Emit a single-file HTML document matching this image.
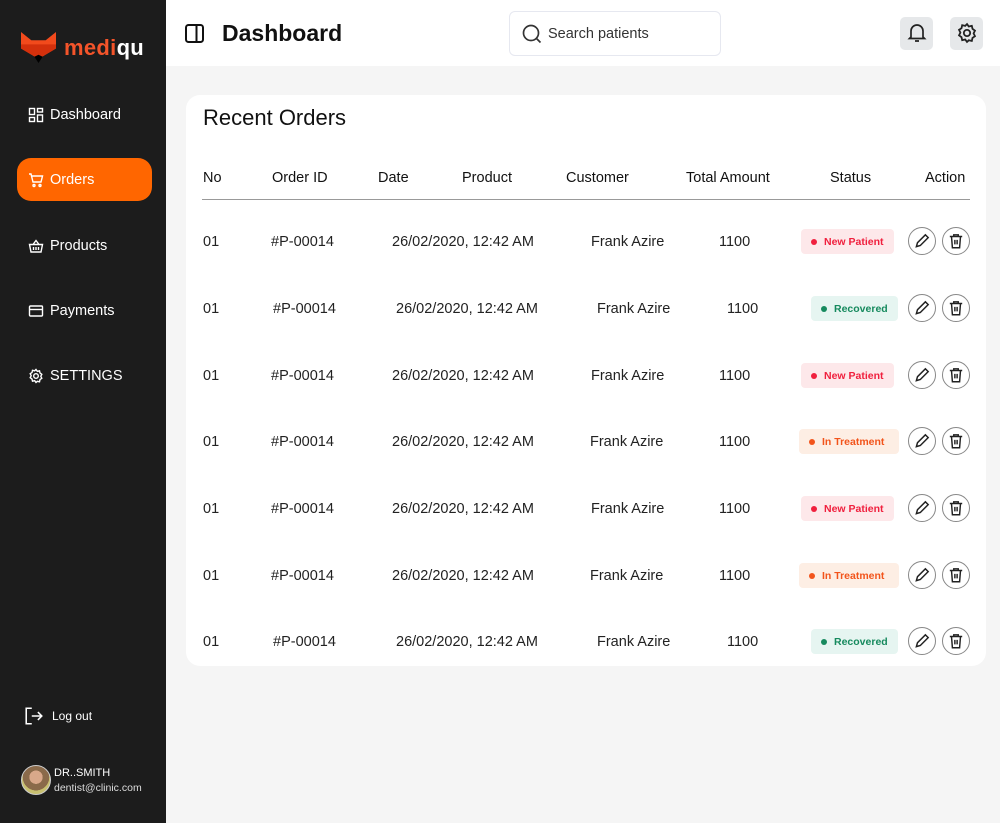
<!DOCTYPE html>
<html><head><meta charset="utf-8"><style>
*{margin:0;padding:0;box-sizing:border-box}
body{width:1000px;height:823px;overflow:hidden;font-family:"Liberation Sans",sans-serif;background:#f5f5f5;position:relative;color:#111}
.sb{position:absolute;left:0;top:0;width:166px;height:823px;background:#1c1c1c;color:#fff}
.abs{position:absolute}
.nav{position:absolute;left:28px;font-size:14.5px;display:flex;align-items:center;gap:6px;color:#fff}
.nav svg{width:16px;height:16px;fill:none;stroke:#fff;stroke-width:1.4}
.top{position:absolute;left:166px;top:0;right:0;height:66px;background:#fff}
.card{position:absolute;left:186px;top:95px;width:800px;height:571px;background:#fff;border-radius:14px}
.h{position:absolute;top:170px;font-size:14.5px;color:#111}
.row{position:absolute;left:0;width:1000px;height:30px}
.row span{position:absolute;top:1px;line-height:30px;font-size:14.5px;color:#222}
.b{position:absolute;top:3px;height:25px;border-radius:4px;font-size:10.5px;font-weight:bold;display:flex;align-items:center;padding-left:10px;gap:7px}
.b i{width:6px;height:6px;border-radius:50%;display:block}
.np{left:801px;width:93px;background:#fde8ea;color:#f0203e}.np i{background:#f0203e}
.rc{left:811px;width:87px;background:#e6f5f1;color:#168a5e}.rc i{background:#168a5e}
.it{left:799px;width:100px;background:#fdeee4;color:#f2541b}.it i{background:#f2541b}
.ic{position:absolute;top:1px;width:28px;height:28px;border:1px solid #888;border-radius:50%;display:flex;align-items:center;justify-content:center}
.ic svg{width:18px;height:18px;fill:none;stroke:#222;stroke-width:1.3}
</style></head><body>
<div class="sb">
 <svg class="abs" style="left:21px;top:32px" width="35" height="31" viewBox="0 0 34 30"><polygon points="0,0 10,8 24,8 34,0 34,16 17,26 0,16" fill="#f24a1c"/><polygon points="0,12 17,12 34,12 34,16 17,26 0,16" fill="#d4300c"/><polygon points="13,24 17,30 21,24 17,22" fill="#000"/></svg>
 <div class="abs" style="left:64px;top:35px;font-size:22px;font-weight:bold;letter-spacing:0.3px"><span style="color:#f4542a">medi</span><span style="color:#fff">qu</span></div>
 <div class="nav" style="top:107px"><svg viewBox="0 0 16 16"><rect x="1.5" y="1.5" width="5" height="6"/><rect x="9.5" y="1.5" width="5" height="3.5"/><rect x="1.5" y="10.5" width="5" height="4"/><rect x="9.5" y="8" width="5" height="6.5"/></svg>Dashboard</div>
 <div class="abs" style="left:17px;top:158px;width:135px;height:43px;background:#ff6600;border-radius:14px"></div>
 <div class="nav" style="top:172px"><svg viewBox="0 0 16 16"><path d="M1 2h2l2 8h8l1.5-6H4"/><circle cx="6" cy="13.5" r="1"/><circle cx="12" cy="13.5" r="1"/></svg>Orders</div>
 <div class="nav" style="top:238px"><svg viewBox="0 0 16 16"><path d="M1.5 6.5h13l-1.5 7.5h-10zM5 6.5l3-4 3 4M5.5 9v3M8 9v3M10.5 9v3"/></svg>Products</div>
 <div class="nav" style="top:303px"><svg viewBox="0 0 16 16"><rect x="1.5" y="3" width="13" height="10" rx="1"/><path d="M1.5 6.5h13"/></svg>Payments</div>
 <div class="nav" style="top:368px"><svg viewBox="0 0 16 16"><circle cx="8" cy="8" r="2.3"/><path d="M8 1.5l1.3 1.8 2.2-.5.5 2.2 1.8 1.3-1 2 1 2-1.8 1.3-.5 2.2-2.2-.5L8 14.5l-1.3-1.8-2.2.5-.5-2.2L2.2 9.7l1-2-1-2L4 4.5l.5-2.2 2.2.5z"/></svg>SETTINGS</div>
 <div class="nav" style="top:705px;font-size:12px;gap:8px;left:24px"><svg viewBox="0 0 18 18" style="width:20px;height:22px"><path d="M7 2H2v14h5M7 9h9M12.5 5.5L16 9l-3.5 3.5"/></svg>Log out</div>
 <div class="abs" style="left:21px;top:765px;width:30px;height:30px;border-radius:50%;background:radial-gradient(circle at 50% 40%,#d9a88a 0 30%,#8a6a4a 31% 60%,#c8c070 61%);border:1px solid #ccc"></div>
 <div class="abs" style="left:54px;top:767px;font-size:11px;color:#fff">DR..SMITH</div>
 <div class="abs" style="left:54px;top:782px;font-size:10.5px;color:#ddd">dentist@clinic.com</div>
</div>
<div class="top">
 <svg class="abs" style="left:19px;top:24px" width="20" height="20" viewBox="0 0 20 20" fill="none" stroke="#111" stroke-width="2"><rect x="1" y="1" width="17" height="17" rx="2.5"/><path d="M11.5 1v17"/></svg>
 <div class="abs" style="left:56px;top:20px;font-size:23px;font-weight:bold">Dashboard</div>
 <div class="abs" style="left:343px;top:11px;width:212px;height:45px;border:1px solid #e6e8f0;border-radius:6px"></div>
 <svg class="abs" style="left:355px;top:23px" width="22" height="22" viewBox="0 0 22 22" fill="none" stroke="#333" stroke-width="1.7"><circle cx="10" cy="10" r="7.5"/><path d="M15.5 15.5l4 4"/></svg>
 <div class="abs" style="left:382px;top:26px;font-size:14.5px;color:#333">Search patients</div>
 <div class="abs" style="left:734px;top:17px;width:33px;height:33px;border-radius:5px;background:#e6e8ea"></div>
 <svg class="abs" style="left:740px;top:22px" width="22" height="22" viewBox="0 0 22 22" fill="none" stroke="#222" stroke-width="1.7"><path d="M5 15V9a6 6 0 0 1 12 0v6l1.5 1.5h-15zM9 19h4"/></svg>
 <div class="abs" style="left:784px;top:17px;width:33px;height:33px;border-radius:5px;background:#e6e8ea"></div>
 <svg class="abs" style="left:790px;top:22px" width="22" height="22" viewBox="0 0 16 16" fill="none" stroke="#222" stroke-width="1.3"><circle cx="8" cy="8" r="2.3"/><path d="M8 1.5l1.3 1.8 2.2-.5.5 2.2 1.8 1.3-1 2 1 2-1.8 1.3-.5 2.2-2.2-.5L8 14.5l-1.3-1.8-2.2.5-.5-2.2L2.2 9.7l1-2-1-2L4 4.5l.5-2.2 2.2.5z"/></svg>
</div>
<div class="card"></div>
<div class="abs" style="left:203px;top:105px;font-size:22px">Recent Orders</div>
<div class="h" style="left:203px">No</div><div class="h" style="left:272px">Order ID</div><div class="h" style="left:378px">Date</div><div class="h" style="left:462px">Product</div><div class="h" style="left:566px">Customer</div><div class="h" style="left:686px">Total Amount</div><div class="h" style="left:830px">Status</div><div class="h" style="left:925px">Action</div>
<div class="abs" style="left:202px;top:199px;width:768px;height:1px;background:#999"></div>

<div class="row" style="top:226px"><span style="left:203px">01</span><span style="left:271px">#P-00014</span><span style="left:392px">26/02/2020, 12:42 AM</span><span style="left:591px">Frank Azire</span><span style="left:719px">1100</span><div class="b np"><i></i>New Patient</div><div class="ic" style="left:908px"><svg viewBox="0 0 16 16"><path d="M3 13l1-3.5 7-7 2.5 2.5-7 7z"/></svg></div><div class="ic" style="left:942px"><svg viewBox="0 0 16 16"><path d="M2.5 4h11M6 4V2.5h4V4M4 4l.8 10h6.4L12 4M7 7v4M9 7v4"/></svg></div></div>
<div class="row" style="top:293px"><span style="left:203px">01</span><span style="left:273px">#P-00014</span><span style="left:396px">26/02/2020, 12:42 AM</span><span style="left:597px">Frank Azire</span><span style="left:727px">1100</span><div class="b rc"><i></i>Recovered</div><div class="ic" style="left:908px"><svg viewBox="0 0 16 16"><path d="M3 13l1-3.5 7-7 2.5 2.5-7 7z"/></svg></div><div class="ic" style="left:942px"><svg viewBox="0 0 16 16"><path d="M2.5 4h11M6 4V2.5h4V4M4 4l.8 10h6.4L12 4M7 7v4M9 7v4"/></svg></div></div>
<div class="row" style="top:360px"><span style="left:203px">01</span><span style="left:271px">#P-00014</span><span style="left:392px">26/02/2020, 12:42 AM</span><span style="left:591px">Frank Azire</span><span style="left:719px">1100</span><div class="b np"><i></i>New Patient</div><div class="ic" style="left:908px"><svg viewBox="0 0 16 16"><path d="M3 13l1-3.5 7-7 2.5 2.5-7 7z"/></svg></div><div class="ic" style="left:942px"><svg viewBox="0 0 16 16"><path d="M2.5 4h11M6 4V2.5h4V4M4 4l.8 10h6.4L12 4M7 7v4M9 7v4"/></svg></div></div>
<div class="row" style="top:426px"><span style="left:203px">01</span><span style="left:271px">#P-00014</span><span style="left:392px">26/02/2020, 12:42 AM</span><span style="left:590px">Frank Azire</span><span style="left:719px">1100</span><div class="b it"><i></i>In Treatment</div><div class="ic" style="left:908px"><svg viewBox="0 0 16 16"><path d="M3 13l1-3.5 7-7 2.5 2.5-7 7z"/></svg></div><div class="ic" style="left:942px"><svg viewBox="0 0 16 16"><path d="M2.5 4h11M6 4V2.5h4V4M4 4l.8 10h6.4L12 4M7 7v4M9 7v4"/></svg></div></div>
<div class="row" style="top:493px"><span style="left:203px">01</span><span style="left:271px">#P-00014</span><span style="left:392px">26/02/2020, 12:42 AM</span><span style="left:591px">Frank Azire</span><span style="left:719px">1100</span><div class="b np"><i></i>New Patient</div><div class="ic" style="left:908px"><svg viewBox="0 0 16 16"><path d="M3 13l1-3.5 7-7 2.5 2.5-7 7z"/></svg></div><div class="ic" style="left:942px"><svg viewBox="0 0 16 16"><path d="M2.5 4h11M6 4V2.5h4V4M4 4l.8 10h6.4L12 4M7 7v4M9 7v4"/></svg></div></div>
<div class="row" style="top:560px"><span style="left:203px">01</span><span style="left:271px">#P-00014</span><span style="left:392px">26/02/2020, 12:42 AM</span><span style="left:590px">Frank Azire</span><span style="left:719px">1100</span><div class="b it"><i></i>In Treatment</div><div class="ic" style="left:908px"><svg viewBox="0 0 16 16"><path d="M3 13l1-3.5 7-7 2.5 2.5-7 7z"/></svg></div><div class="ic" style="left:942px"><svg viewBox="0 0 16 16"><path d="M2.5 4h11M6 4V2.5h4V4M4 4l.8 10h6.4L12 4M7 7v4M9 7v4"/></svg></div></div>
<div class="row" style="top:626px"><span style="left:203px">01</span><span style="left:273px">#P-00014</span><span style="left:396px">26/02/2020, 12:42 AM</span><span style="left:597px">Frank Azire</span><span style="left:727px">1100</span><div class="b rc"><i></i>Recovered</div><div class="ic" style="left:908px"><svg viewBox="0 0 16 16"><path d="M3 13l1-3.5 7-7 2.5 2.5-7 7z"/></svg></div><div class="ic" style="left:942px"><svg viewBox="0 0 16 16"><path d="M2.5 4h11M6 4V2.5h4V4M4 4l.8 10h6.4L12 4M7 7v4M9 7v4"/></svg></div></div>
</body></html>
